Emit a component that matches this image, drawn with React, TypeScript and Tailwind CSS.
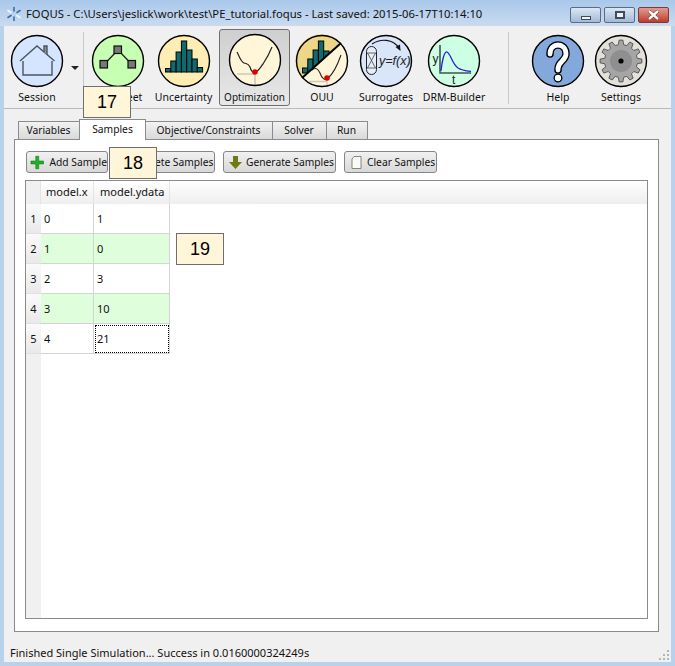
import React from 'react'

const gearPoints = Array.from({ length: 12 }, (_, i) => {
  const a = (i / 12) * Math.PI * 2
  const step = Math.PI / 12
  const at = (r: number, t: number) =>
    `${(27 + r * Math.cos(t)).toFixed(1)},${(27 + r * Math.sin(t)).toFixed(1)}`
  return [
    at(16.5, a - step * 0.62),
    at(21, a - step * 0.34),
    at(21, a + step * 0.34),
    at(16.5, a + step * 0.62),
  ].join(' ')
}).join(' ')

const Disc = ({ fill, children }: { fill: string; children?: React.ReactNode }) => (
  <svg width="54" height="54" viewBox="0 0 54 54" className="block">
    <circle cx="27" cy="27" r="25.5" fill={fill} />
    {children}
    <circle cx="27" cy="27" r="25.5" fill="none" stroke="#000" strokeWidth="1.4" />
  </svg>
)

const HouseIcon = () => (
  <Disc fill="#d6e5ff">
    <g fill="none" stroke="#4a5560" strokeWidth="1.4">
      <path d="M10 27 L27 12 L44.5 27" />
      <path d="M34 18 V12 H37 V21" fill="#8a9099" />
      <path d="M13 27 V41 H42 V27" />
    </g>
  </Disc>
)

const FlowIcon = () => (
  <Disc fill="#c7ffb3">
    <path d="M13 30.5 L27 16 L41 30.5" fill="none" stroke="#222" strokeWidth="1.3" />
    <g fill="#777" stroke="#111" strokeWidth="1.2">
      <rect x="23" y="12" width="7.5" height="7.5" />
      <rect x="9" y="26.5" width="7.5" height="7.5" />
      <rect x="37" y="26.5" width="7.5" height="7.5" />
    </g>
  </Disc>
)

const Bars = ({ tops, x0, base }: { tops: number[]; x0: number; base: number }) => (
  <g fill="#0f6a70" stroke="#000" strokeWidth="1">
    {tops.map((t, i) => (
      <rect key={i} x={x0 + i * 5.3} y={t} width="5.3" height={base - t} />
    ))}
  </g>
)

const UncertaintyIcon = () => (
  <Disc fill="#ffedb3">
    <Bars tops={[34.5, 27, 18, 7, 16, 25, 33.5]} x0={8.5} base={38} />
  </Disc>
)

const OptimizationIcon = () => (
  <Disc fill="#fff6da">
    <path d="M9 41 H27 M27 39 V52" fill="none" stroke="#c9c9c0" strokeWidth="1.6" />
    <path
      d="M9 19 C12 25 13 29 16 30 C19 31 20 30 22 34 C23 38 25 39.5 27 39.3 C31 38 33 33 35 31 C39 25 42 19 44 14"
      fill="none"
      stroke="#222"
      strokeWidth="1.2"
    />
    <circle cx="27" cy="39" r="2.8" fill="#e00000" />
  </Disc>
)

const OuuIcon = () => (
  <Disc fill="#fff6da">
    <path d="M7 44 L46 9 A25.5 25.5 0 0 0 7 44 Z" fill="#edd685" />
    <Bars tops={[34, 25, 16, 7, 17]} x0={7.5} base={39} />
    <path d="M7 44 L46 9 A25.5 25.5 0 0 1 7 44 Z" fill="#fff6da" />
    <path d="M14 47.5 H32 M32 45 V52" fill="none" stroke="#c9c9c0" strokeWidth="1.3" />
    <path
      d="M17 36 C21 33 23 35 25 39 C27 45 30 47 33 44 C37 41 41 35 46 21"
      fill="none"
      stroke="#222"
      strokeWidth="1.1"
    />
    <path d="M7 44 L46 9" stroke="#000" strokeWidth="2" />
    <circle cx="32" cy="44" r="2.8" fill="#e00000" />
  </Disc>
)

const SurrogatesIcon = () => (
  <Disc fill="#d9e5f8">
    <rect x="7.5" y="12.5" width="10" height="28" rx="5" fill="#e6edf8" stroke="#222" strokeWidth="1" />
    <path d="M8 19 H17 M8 34 H17 M8.5 19 L16.5 34 M16.5 19 L8.5 34" stroke="#444" strokeWidth="0.8" fill="none" />
    <path d="M13 10 C22 4 34 5 40 14" fill="none" stroke="#111" strokeWidth="1.1" />
    <path d="M36.5 13 L41.5 17 L41 10.5 Z" fill="#111" />
    <text x="20" y="31" fontSize="12.5" fontStyle="italic" fontFamily="'Liberation Sans', sans-serif" fill="#222">
      y=f(x)
    </text>
  </Disc>
)

const DrmIcon = () => (
  <Disc fill="#ccffe3">
    <path d="M13 11 V39 H44" fill="none" stroke="#44554d" strokeWidth="1.6" />
    <path d="M14 37 C15 28 17 17 20 18 C24 20 25 30 31 34 C35 36.5 40 37 44 37.5" fill="none" stroke="#2222dd" strokeWidth="1.3" />
    <text x="5.5" y="29" fontSize="12" fontFamily="'Liberation Sans', sans-serif" fill="#222">y</text>
    <text x="25" y="50" fontSize="12" fontFamily="'Liberation Sans', sans-serif" fill="#222">t</text>
  </Disc>
)

const HelpIcon = () => (
  <Disc fill="#82a8dc">
    <path
      d="M19 20 C19 8 35 8 35 20 C35 27 27 27 27 35 V36"
      fill="none"
      stroke="#000"
      strokeWidth="7.5"
      strokeLinecap="round"
    />
    <path
      d="M19 20 C19 8 35 8 35 20 C35 27 27 27 27 35 V36"
      fill="none"
      stroke="#fff"
      strokeWidth="4.8"
      strokeLinecap="round"
    />
    <circle cx="27" cy="44" r="3.8" fill="#fff" stroke="#000" strokeWidth="1.3" />
  </Disc>
)

const SettingsIcon = () => (
  <Disc fill="#e4e0da">
    <polygon points={gearPoints} fill="#a5a5a5" stroke="#444" strokeWidth="0.8" />
    <circle cx="27" cy="27" r="11" fill="#8f8f8f" />
    <circle cx="27" cy="27" r="2.6" fill="#000" />
  </Disc>
)

const ToolButton = ({
  label,
  width,
  active,
  children,
}: {
  label: string
  width: string
  active?: boolean
  children: React.ReactNode
}) => (
  <div
    className={`flex flex-col items-center shrink-0 ${width} ${
      active
        ? 'mt-[3px] h-[77px] pt-[3px] text-[10px] border border-[#6f6f6f] rounded-[3px] bg-gradient-to-b from-[#cfcfcf] to-[#e8e8e8]'
        : 'pt-[8px]'
    }`}
  >
    {children}
    <span className={`whitespace-nowrap ${active ? 'mt-[3px]' : 'mt-[2px]'}`}>{label}</span>
  </div>
)

const Tab = ({ label, width, active }: { label: string; width: string; active?: boolean }) => (
  <div
    className={`flex items-center justify-center shrink-0 text-[10.25px] border border-[#8a8a8f] ${width} ${
      active
        ? 'h-[21px] -mb-px border-b-0 bg-white z-10'
        : 'h-[18px] border-b-0 -ml-px pt-px pr-px bg-gradient-to-b from-[#f2f2f2] to-[#d9d9d9]'
    }`}
  >
    {label}
  </div>
)

const ActionButton = ({ width, children }: { width: string; children: React.ReactNode }) => (
  <div
    className={`flex items-center h-[22px] pt-px shrink-0 whitespace-nowrap text-[10.25px] rounded-[3px] border border-[#85858a] bg-gradient-to-b from-[#f1f1f1] to-[#d8d8d8] ${width}`}
  >
    {children}
  </div>
)

const rows = [
  { n: 1, x: '0', y: '1' },
  { n: 2, x: '1', y: '0' },
  { n: 3, x: '2', y: '3' },
  { n: 4, x: '3', y: '10' },
  { n: 5, x: '4', y: '21' },
]

const calloutClass =
  "absolute w-[48px] h-[32px] flex items-center justify-center bg-[#fff5d8] border border-[#6e6e6e] text-[18px] text-black font-['Liberation_Sans',sans-serif]"

const App = () => {
  return (
    <div className="relative w-[675px] h-[666px] overflow-hidden flex flex-col bg-[#b9d1ea] text-[#111] text-[10.5px] font-['Noto_Sans',sans-serif]">
      {/* title bar */}
      <div className="flex items-start h-[26px] shrink-0 bg-gradient-to-b from-[#a9c8ea] to-[#c9dbf0]">
        <svg width="16" height="16" viewBox="0 0 16 16" className="ml-[6px] mt-[6px] shrink-0">
          <g stroke="#3d6ea5" strokeWidth="1.6" strokeLinecap="round">
            <path d="M8 1.5 V5" />
            <path d="M8 11 V14.5" />
            <path d="M2 4.5 L5 6.5" stroke="#f4f8fc" />
            <path d="M14 4.5 L11 6.5" />
            <path d="M2 11.5 L5 9.5" />
            <path d="M14 11.5 L11 9.5" stroke="#f4f8fc" />
          </g>
        </svg>
        <span className="ml-[4px] mt-[4px] whitespace-nowrap text-[#111] text-[11.25px] leading-[20px]">
          FOQUS - C:\Users\jeslick\work\test\PE_tutorial.foqus - Last saved: 2015-06-17T10:14:10
        </span>
        <div className="ml-auto mr-[6px] mt-[7px] flex gap-[3px]">
          <div className="flex items-end justify-center pb-[2px] w-[31px] h-[16px] rounded-[2px] border border-[#5b6d82] bg-gradient-to-b from-[#dbe7f4] to-[#a4bad4]">
            <div className="w-[10px] h-[4px] bg-[#eef2f7] border border-[#3f4c5c]" />
          </div>
          <div className="flex items-center justify-center w-[31px] h-[16px] rounded-[2px] border border-[#5b6d82] bg-gradient-to-b from-[#dbe7f4] to-[#a4bad4]">
            <div className="w-[10px] h-[8px] border-2 border-[#3f4c5c] bg-[#eef2f7]" />
          </div>
          <div className="flex items-center justify-center w-[31px] h-[16px] rounded-[2px] border border-[#7c3b36] bg-gradient-to-b from-[#e39a8e] to-[#bd3a2c]">
            <svg width="15" height="10" viewBox="0 0 15 10">
              <path d="M3 1 L12 9 M12 1 L3 9" stroke="#4a2a2a" strokeWidth="3.4" />
              <path d="M3 1 L12 9 M12 1 L3 9" stroke="#fff" strokeWidth="2.4" />
            </svg>
          </div>
        </div>
      </div>

      <div className="flex-1 flex flex-col ml-[4px] mr-[4px] mb-[4px] bg-[#f0f0f0] relative">
        {/* toolbar */}
        <div className="flex h-[83px] shrink-0 border-b border-[#b9b9b9]">
          <ToolButton label="Session" width="w-[56px] ml-[5px]">
            <HouseIcon />
          </ToolButton>
          <div className="w-[18px] shrink-0 flex justify-center pl-[1px] pt-[40px]">
            <div className="w-0 h-0 border-x-[4px] border-x-transparent border-t-[4px] border-t-[#222]" />
          </div>
          <div className="w-px h-[72px] mt-[6px] bg-[#c8c8c8] shrink-0" />
          <ToolButton label="Flowsheet" width="w-[67px]">
            <FlowIcon />
          </ToolButton>
          <ToolButton label="Uncertainty" width="w-[65px]">
            <UncertaintyIcon />
          </ToolButton>
          <div className="w-[3px] shrink-0" />
          <ToolButton label="Optimization" width="w-[71px]" active>
            <OptimizationIcon />
          </ToolButton>
          <ToolButton label="OUU" width="w-[64px]">
            <OuuIcon />
          </ToolButton>
          <ToolButton label="Surrogates" width="w-[64px]">
            <SurrogatesIcon />
          </ToolButton>
          <ToolButton label="DRM-Builder" width="w-[72px]">
            <DrmIcon />
          </ToolButton>
          <div className="w-px h-[72px] mt-[6px] ml-[18px] bg-[#c8c8c8] shrink-0" />
          <ToolButton label="Help" width="w-[60px] ml-[19px]">
            <HelpIcon />
          </ToolButton>
          <ToolButton label="Settings" width="w-[64px] ml-[1px]">
            <SettingsIcon />
          </ToolButton>
        </div>

        {/* tab strip */}
        <div className="flex items-end mt-[10px] ml-[13px] relative z-10">
          <Tab label="Variables" width="w-[62px] ml-px" />
          <Tab label="Samples" width="w-[67px] -ml-px" active />
          <Tab label="Objective/Constraints" width="w-[128px]" />
          <Tab label="Solver" width="w-[55px]" />
          <Tab label="Run" width="w-[42px]" />
        </div>

        {/* tab pane */}
        <div className="flex-1 flex flex-col ml-[10px] mr-[12px] mb-[30px] bg-white border border-[#8a8a8f] pl-[10px] pr-[10px] pt-[11px] pb-[12px]">
          <div className="flex gap-[8px] ml-px shrink-0">
            <ActionButton width="w-[82px]">
              <svg width="15" height="15" viewBox="0 0 15 15" className="ml-[3px] mr-[5px]">
                <path d="M6 1 H9 V6 H14 V9 H9 V14 H6 V9 H1 V6 H6 Z" fill="#22b22a" stroke="#0e6f14" strokeWidth="0.6" />
              </svg>
              Add Sample
            </ActionButton>
            <ActionButton width="w-[99px]">
              <svg width="15" height="15" viewBox="0 0 15 15" className="ml-[3px] mr-[4px]">
                <rect x="1" y="6" width="13" height="3" fill="#cc2222" />
              </svg>
              Delete Samples
            </ActionButton>
            <ActionButton width="w-[113px]">
              <svg width="15" height="15" viewBox="0 0 15 15" className="ml-[4px] mr-[3px]">
                <path d="M5 1 H10 V7 H14 L7.5 14 L1 7 H5 Z" fill="#6f7a12" />
              </svg>
              Generate Samples
            </ActionButton>
            <ActionButton width="w-[93px]">
              <svg width="13" height="15" viewBox="0 0 13 15" className="ml-[5px] mr-[4px]">
                <path d="M4 1.5 H11 V13.5 H2 V4 Z" fill="#fbfbf5" stroke="#777" strokeWidth="0.9" />
              </svg>
              Clear Samples
            </ActionButton>
          </div>

          {/* sample table */}
          <div className="flex-1 flex flex-col mt-[7px] border border-[#8a8a8f] bg-white text-[11px]">
            <div className="flex h-[23px] shrink-0 bg-gradient-to-b from-[#ffffff] to-[#eeeeee]">
              <div className="w-[15px] shrink-0 border-r border-[#e4e4e4] bg-[#f0f0f0]" />
              <div className="w-[53px] pl-[5px] flex items-center shrink-0 border-r border-[#e4e4e4]">model.x</div>
              <div className="w-[76px] pl-[6px] flex items-center shrink-0 border-r border-[#e4e4e4]">model.ydata</div>
            </div>
            {rows.map((r) => (
              <div key={r.n} className="flex h-[30px] shrink-0">
                <div className="w-[15px] shrink-0 flex items-center justify-center pt-px bg-gradient-to-b from-[#fafafa] to-[#e9e9e9] border-b border-[#e0e0e0]">
                  {r.n}
                </div>
                <div
                  className={`w-[53px] shrink-0 flex items-center pl-[3px] pt-px border-r border-b border-[#d4d4d4] ${
                    r.n % 2 === 0 ? 'bg-[#dffedb]' : 'bg-white'
                  }`}
                >
                  {r.x}
                </div>
                <div
                  className={`w-[76px] shrink-0 flex items-center pl-[3px] border-r border-b border-[#d4d4d4] ${
                    r.n % 2 === 0 ? 'bg-[#dffedb] pt-px' : 'bg-white pt-px'
                  }`}
                >
                  {r.n === 5 ? (
                    <div className="w-[74px] h-[28px] -ml-[2px] -mt-px pl-px pt-px flex items-center border border-dotted border-black">
                      {r.y}
                    </div>
                  ) : (
                    r.y
                  )}
                </div>
              </div>
            ))}
            <div className="flex-1 w-[15px] bg-[#f0f0f0]" />
          </div>
        </div>

        {/* status bar */}
        <div className="absolute left-[6px] bottom-[1px] text-[11px] leading-[16px] whitespace-nowrap">
          Finished Single Simulation... Success in 0.0160000324249s
        </div>
        <svg width="12" height="12" viewBox="0 0 12 12" className="absolute right-[1px] bottom-[1px]">
          <g fill="#b5b5b5">
            <rect x="9" y="1" width="2" height="2" />
            <rect x="5" y="5" width="2" height="2" />
            <rect x="9" y="5" width="2" height="2" />
            <rect x="1" y="9" width="2" height="2" />
            <rect x="5" y="9" width="2" height="2" />
            <rect x="9" y="9" width="2" height="2" />
          </g>
        </svg>
      </div>

      {/* numbered callouts */}
      <div className={`${calloutClass} left-[83px] top-[86px]`}>17</div>
      <div className={`${calloutClass} left-[109px] top-[147px]`}>18</div>
      <div className={`${calloutClass} left-[176px] top-[233px]`}>19</div>
    </div>
  )
}

export default App
